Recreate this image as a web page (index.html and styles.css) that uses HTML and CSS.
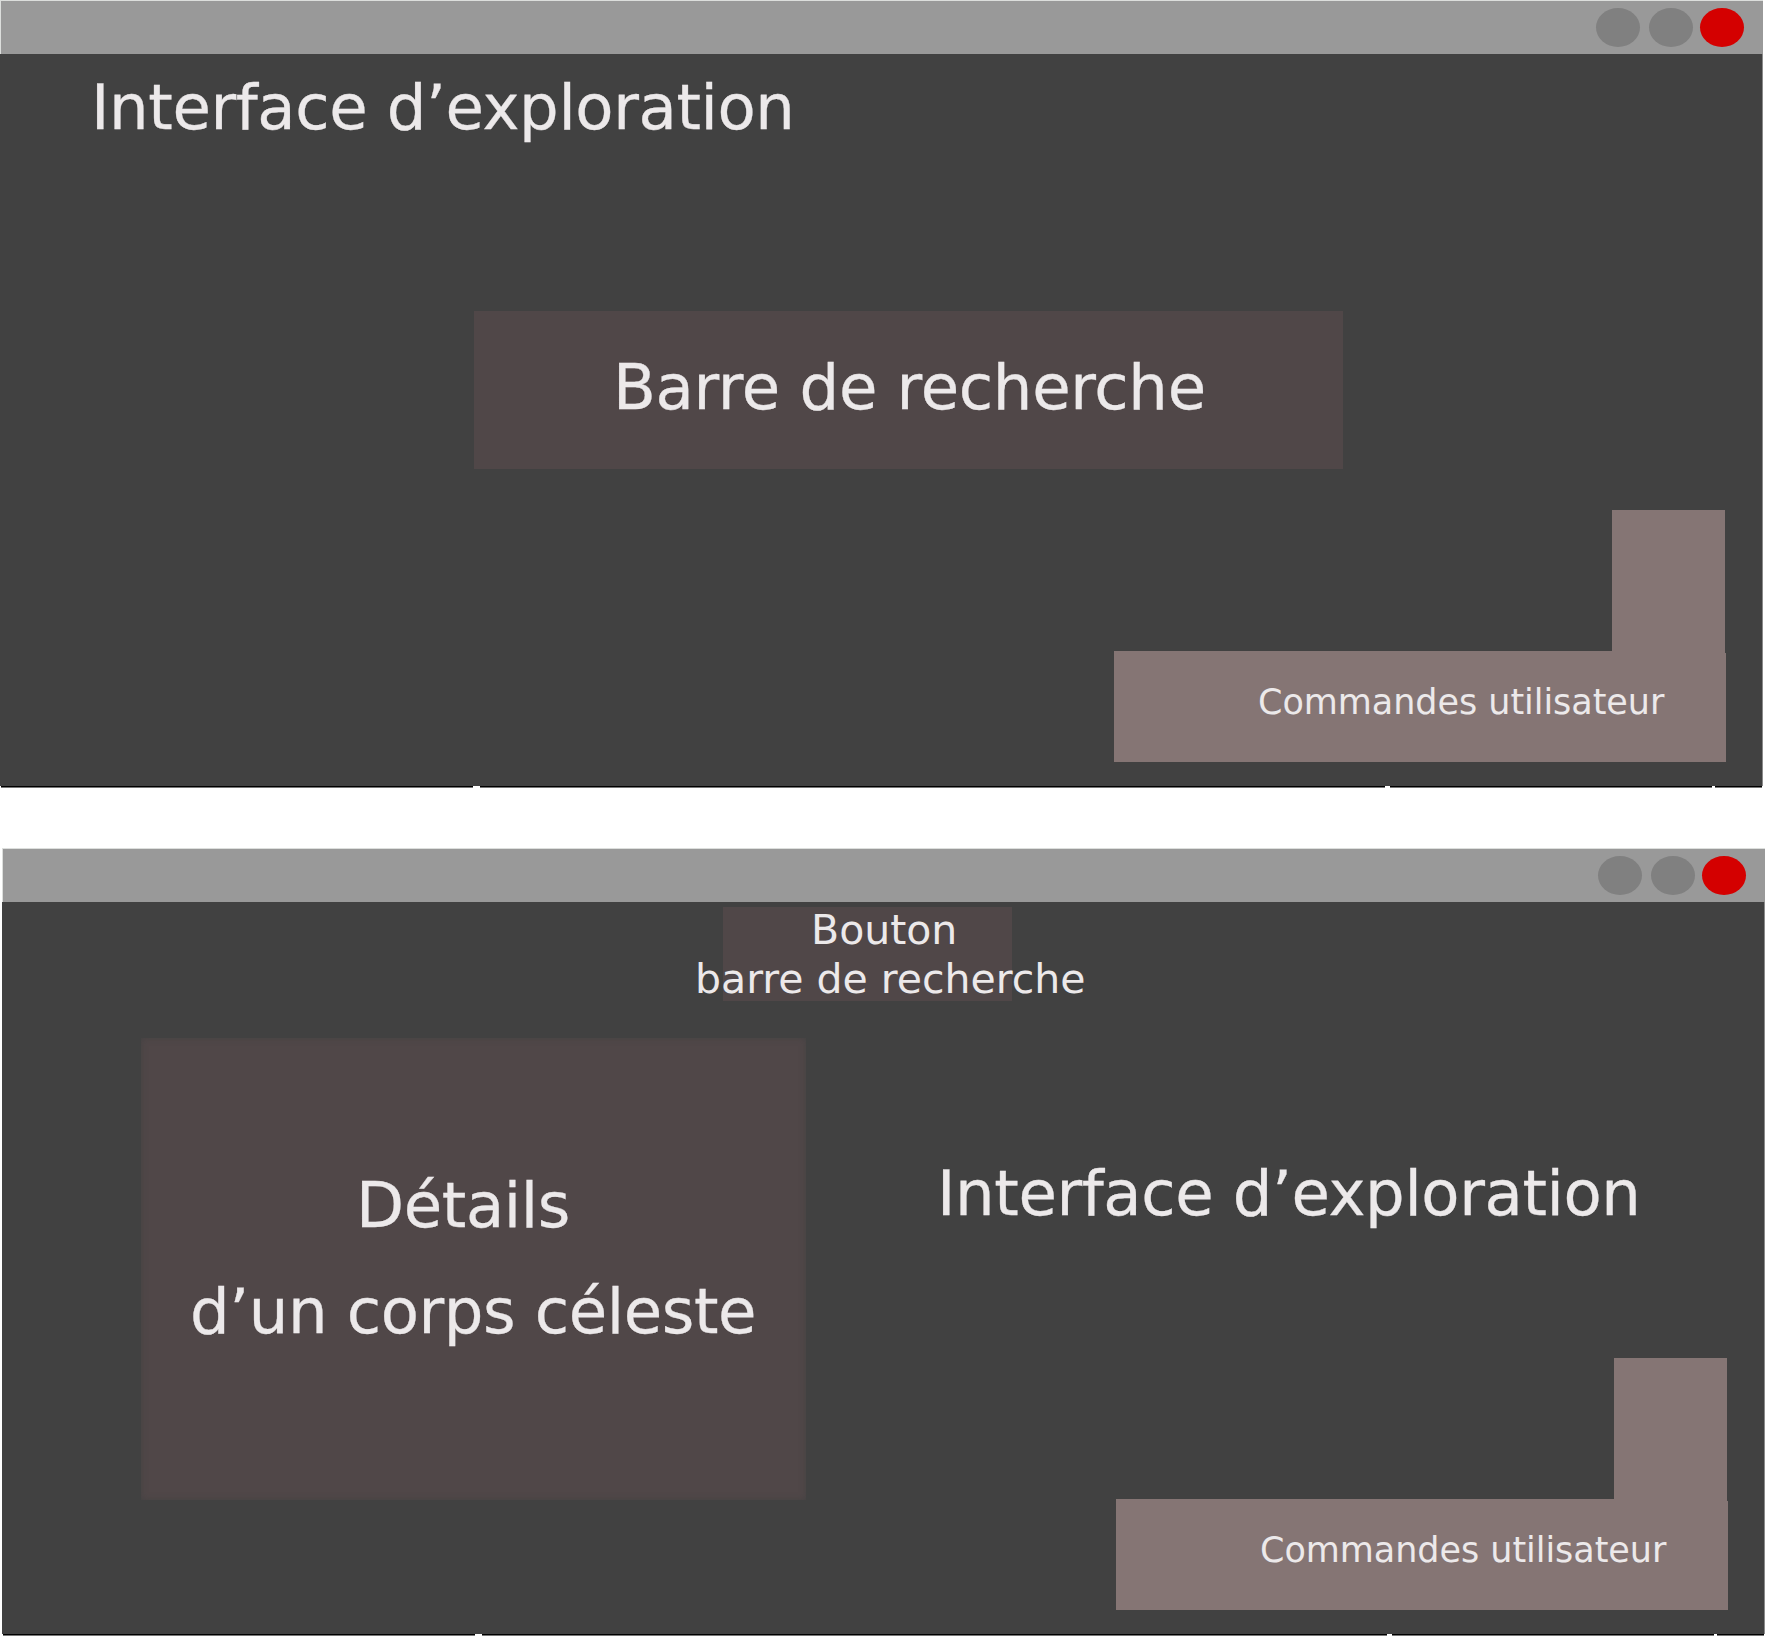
FILE: index.html
```html
<!DOCTYPE html>
<html lang="fr">
<head>
<meta charset="utf-8">
<title>Interface d’exploration</title>
<link rel="stylesheet" href="styles.css">
</head>
<body>
<section class="window">
  <header class="titlebar"><i class="dot"></i><i class="dot"></i><i class="dot close"></i></header>
  <main class="content">
    <h1 class="title">Interface d’exploration</h1>
    <div class="search big">Barre de recherche</div>
    <div class="commands"><div class="column"></div><div class="row">Commandes utilisateur</div></div>
  </main>
  <footer class="edge"><i class="tick t1"></i><i class="tick t2"></i><i class="tick t3"></i></footer>
</section>
<section class="window second">
  <header class="titlebar"><i class="dot"></i><i class="dot"></i><i class="dot close"></i></header>
  <main class="content">
    <div class="button"><span class="l1">Bouton</span><span>barre de recherche</span></div>
    <div class="split">
      <div class="details big"><span class="d1">Détails</span><span>d’un corps céleste</span></div>
      <h1 class="title">Interface d’exploration</h1>
    </div>
    <div class="commands"><div class="column"></div><div class="row">Commandes utilisateur</div></div>
  </main>
  <footer class="edge"><i class="tick t1"></i><i class="tick t2"></i><i class="tick t3"></i></footer>
</section>
</body>
</html>
```
FILE: styles.css
```css
* { box-sizing: border-box; }
html { overflow: hidden; background: #fff; }
body {
  margin: 0;
  height: 1636px;
  display: flex;
  flex-direction: column;
  gap: 60px;
  overflow: hidden;
  color: #ece9ea;
  font-family: "DejaVu Sans", sans-serif;
  white-space: nowrap;
}
.window { width: 1763px; height: 788px; flex: none; display: flex; flex-direction: column; }
.second { margin-left: 2px; }
.titlebar {
  height: 54px;
  flex: none;
  display: flex;
  justify-content: flex-end;
  gap: 9px;
  padding: 7px 19px 0 0;
  background: #999;
  border-top: 1px solid #dcdedc;
  border-left: 1px solid #dcdedc;
}
.dot { width: 44px; height: 39px; border-radius: 50%; background: #808080; }
.close { margin-left: -2px; background: #d40000; }
.content {
  height: 732px;
  flex: none;
  display: flex;
  flex-direction: column;
  background: #414141;
  border-right: 1px solid #8a8a8a;
}
.title, .big {
  margin: 0;
  font-size: 62.5px;
  font-weight: 400;
  line-height: 72px;
  letter-spacing: -0.39px;
  -webkit-text-stroke: 0.3px #ece9ea;
}
.title { padding: 18px 0 0 91px; }
.search {
  width: 869px;
  height: 158px;
  margin: 167px 0 0 474px;
  padding: 41px 0 0 139px;
  background: #504748;
  letter-spacing: -0.31px;
}
.commands {
  width: 612px;
  margin: auto 36px 24px auto;
  display: flex;
  flex-direction: column;
  align-items: flex-end;
}
.column { width: 113px; height: 143px; margin: 0 1px -2px 0; background: #857574; }
.row {
  width: 612px;
  height: 111px;
  padding: 31px 0 0 144px;
  background: #857574;
  clip-path: polygon(0 0, 611px 0, 611px 2px, 612px 2px, 612px 111px, 0 111px);
  font-size: 35px;
  line-height: 40px;
  letter-spacing: -0.05px;
}
.button {
  width: 289px;
  height: 94px;
  margin: 5px 0 0 721px;
  display: flex;
  flex-direction: column;
  flex: none;
  background: #504748;
  font-size: 41px;
  line-height: 49px;
}
.button span { margin: 0 0 0 -28px; }
.button .l1 { margin: -1px 0 0 88px; }
.split { height: 462px; flex: none; display: flex; margin: 37px 0 -142px 139px; }
.details {
  width: 665px;
  height: 462px;
  display: flex;
  flex-direction: column;
  padding: 115px 0 0 49px;
  background: #504748;
  box-shadow: inset 0 0 6px #434242;
}
.details span { line-height: 106px; }
.details .d1 { padding-left: 166px; }
.split .title { padding: 120px 0 0 131px; }
.edge { position: relative; height: 2px; background: #000; border-bottom: 1px solid #777; margin: 0 1px; }
.tick { position: absolute; top: 0; height: 2px; background: #fff; }
.t1 { left: 472px; width: 7px; }
.t2 { left: 1384px; width: 5px; }
.t3 { left: 1711px; width: 3px; }
```
